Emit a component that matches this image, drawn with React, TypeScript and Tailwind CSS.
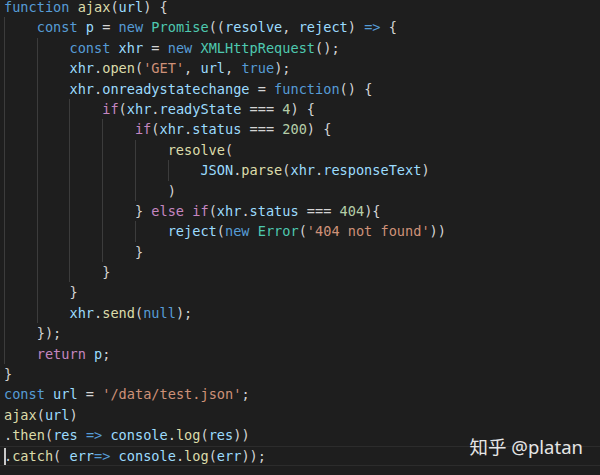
import React from "react";

const LINES = [
  "function ajax(url) {",
  "    const p = new Promise((resolve, reject) => {",
  "        const xhr = new XMLHttpRequest();",
  "        xhr.open('GET', url, true);",
  "        xhr.onreadystatechange = function() {",
  "            if(xhr.readyState === 4) {",
  "                if(xhr.status === 200) {",
  "                    resolve(",
  "                        JSON.parse(xhr.responseText)",
  "                    )",
  "                } else if(xhr.status === 404){",
  "                    reject(new Error('404 not found'))",
  "                }",
  "            }",
  "        }",
  "        xhr.send(null);",
  "    });",
  "    return p;",
  "}",
  "const url = '/data/test.json';",
  "ajax(url)",
  ".then(res => console.log(res))",
  ".catch( err=> console.log(err));",
];

const KW = new Set(["function", "const", "new", "true", "null"]);
const CTRL = new Set(["if", "else", "return"]);

const CLS: Record<string, string> = {
  kw: "text-[#569cd6]",
  ctrl: "text-[#c586c0]",
  var: "text-[#9cdcfe]",
  fn: "text-[#dcdcaa]",
  cls: "text-[#4ec9b0]",
  str: "text-[#ce9178]",
  num: "text-[#b5cea8]",
  punc: "text-[#d4d4d4]",
};

type Tok = { t: string; k: string };

function tokenize(s: string): Tok[] {
  const re = /('[^']*')|(\d+)|([A-Za-z_$][\w$]*)|(=>)|(\s+)|(.)/g;
  const out: Tok[] = [];
  let m: RegExpExecArray | null;
  while ((m = re.exec(s))) {
    if (m[1]) out.push({ t: m[1], k: "str" });
    else if (m[2]) out.push({ t: m[2], k: "num" });
    else if (m[3]) {
      const w = m[3];
      const rest = s.slice(re.lastIndex).trimStart();
      let k = "var";
      if (KW.has(w)) k = "kw";
      else if (CTRL.has(w)) k = "ctrl";
      else if (w === "JSON") k = "var";
      else if (/^[A-Z]/.test(w)) k = "cls";
      else if (rest.startsWith("(") && w !== "reject") k = "fn";
      out.push({ t: w, k });
    } else if (m[4]) out.push({ t: m[4], k: "kw" });
    else if (m[5]) out.push({ t: m[5], k: "punc" });
    else out.push({ t: m[6], k: "punc" });
  }
  return out;
}

export default function App() {
  return (
    <div className="relative w-[600px] h-[475px] overflow-hidden bg-[#1e1e1e]">
      <div className="-mt-[3px] font-['DejaVu_Sans_Mono',monospace] text-[13.6px] leading-[20.4px] whitespace-pre">
        {LINES.map((line, i) => {
          const indent = line.match(/^ */)![0].length;
          const levels = Math.floor(indent / 4);
          const body = line.slice(indent);
          const last = i === LINES.length - 1;
          return (
            <div
              key={i}
              className={
                last
                  ? "relative flex h-[20.4px] pl-[4px] shadow-[inset_0_1px_0_#2c2c2c,inset_0_-1px_0_#2c2c2c]"
                  : "relative flex h-[20.4px] pl-[4px]"
              }
            >
              {Array.from({ length: levels }).map((_, j) => (
                <span key={j} className="inline-block w-[4ch] h-full border-l border-[#3c3c3c]" />
              ))}
              <span>
                {tokenize(body).map((tk, j) => (
                  <span key={j} className={CLS[tk.k]}>
                    {tk.t}
                  </span>
                ))}
              </span>
              {last && (
                <span className="absolute left-[4px] top-[2px] w-[1.5px] h-[17px] bg-[#c8c8c8]" />
              )}
            </div>
          );
        })}
      </div>
      <div className="absolute right-[17px] top-[436px] font-['Noto_Sans','Noto_Sans_CJK_SC',sans-serif] text-[18.5px] leading-[22px] text-[#e6e6e6]">
        知乎 @platan
      </div>
    </div>
  );
}
